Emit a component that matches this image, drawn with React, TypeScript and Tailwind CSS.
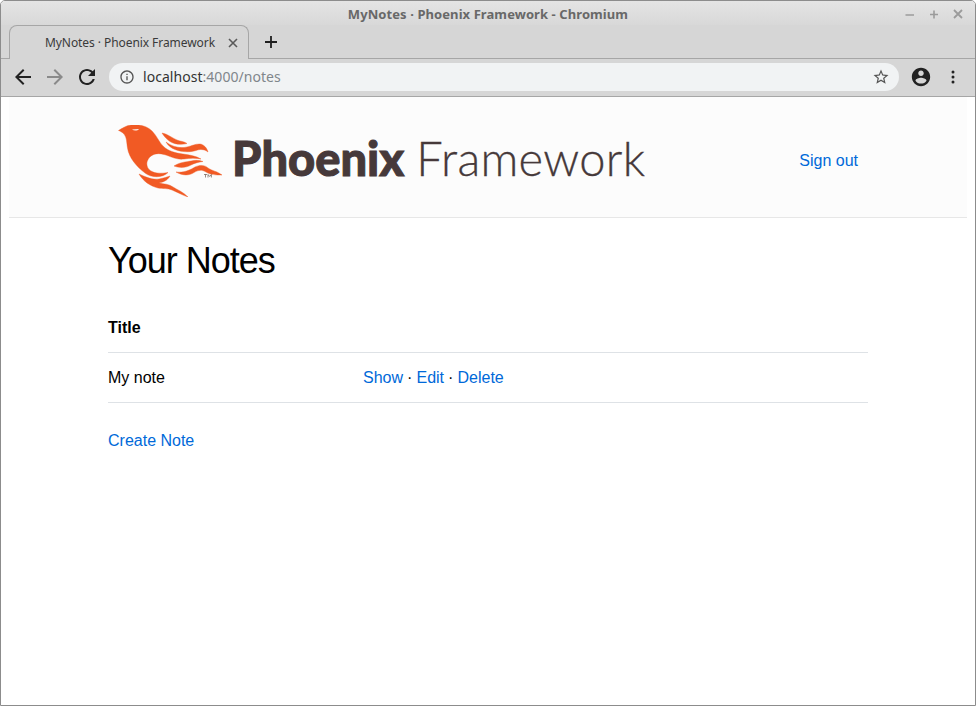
import React from "react";

const Ic = ({ d, className }: { d: string; className: string }) => (
  <svg viewBox="0 0 24 24" className={className} fill="currentColor"><path d={d} /></svg>
);

function Phoenix() {
  return (
    <svg viewBox="118 125 105 72" width={105} height={72} className="shrink-0" fill="#f15a24" stroke="#f15a24" strokeWidth="0.4">
      <path d="M118.500 130.500C122 128.500 126 125.500 131 125C139 124 147 126 152 131C157 136 159 142 163 146C168 151 175 153 183 154C190 155 196 156 201 159C196 158 190 158 184 159C176 160 170 156 164 154.500C156 152 149 155 147 162C146 168 150 172 157 173C162 173.500 165 173 168 172.500C163 178 151 178 145 173C137 167 129 158 127.500 148C126.500 142 127 138 124 134C122 132 120 131 118.500 130.500Z" />
      <path d="M132 129.500L139 129C137.500 131 134 131 132 129.500Z" fill="#fdf2ec" stroke="none" />
      <path d="M162 133C168 134 172 138 177 140C181 141.500 184 141.500 187 143.500C181 145 175 144.500 170 141.500C167 139.500 164 136.500 162 133Z" />
      <path d="M166 142C171 146 178 148 184 147.500C190 147 195 143.500 200 144C204 144.500 207 148 208 152C204 149 200 149 196 150.500C190 152.500 181 152 175 149.500C171 148 168 145.500 166 142Z" />
      <path d="M174 166C180 162 186 162 191 161C195 160 199 160 203 161.500C199 162 195 163 191 165C186 168 179 168 174 166Z" />
      <path d="M176 172C184 173 190 170 195 167C200 164.500 205 165 208 168C212 171 217 171 222 175C216 175 211 175 206 172C202 169.500 198 170 194 172.500C189 176 182 175.500 176 172Z" />
      <path d="M139 174C146 177 152 180 159 179C164 178 167 177 170 176C167 181 163 182 159 183C164 184 169 184 173 187C178 190 183 192 188 197C182 195 177 192 172 190C168 188 163 189 158 188C150 186 143 181 139 174Z" />
      <path d="M204 174.500H207M205.500 174.500V177.500M208 177.500V174.500L209.700 176.500L211.400 174.500V177.500" fill="none" stroke="#6b5a50" strokeWidth="0.7" />
    </svg>
  );
}

export default function App() {
  return (
    <div className="w-[976px] h-[706px] flex flex-col bg-white border border-[#8c8c8c] rounded-t-[5px] overflow-hidden font-['Liberation_Sans',sans-serif]">
      <div className="h-[24px] grid grid-cols-[1fr_auto_1fr] items-center bg-gradient-to-b from-[#e4e4e4] to-[#d8d8d8] font-['Noto_Sans',sans-serif]">
        <div />
        <div className="text-[13px] font-bold text-[#686868] pt-[4px] tracking-[0.08px]">MyNotes · Phoenix Framework - Chromium</div>
        <div className="flex justify-end items-center gap-[10px] pr-[10px] pt-[2px] text-[#9b9b9b]">
          <svg width="14" height="14" viewBox="0 0 14 14"><path d="M2.5 8H11" stroke="currentColor" strokeWidth="1.6" /></svg>
          <svg width="14" height="14" viewBox="0 0 14 14"><path d="M3 7.500H11M7 3.500V11.500" stroke="currentColor" strokeWidth="1.6" /></svg>
          <svg width="14" height="14" viewBox="0 0 14 14"><path d="M3 3L11 11M11 3L3 11" stroke="currentColor" strokeWidth="1.8" /></svg>
        </div>
      </div>
      <div className="h-[34px] flex items-end bg-[#d6d6d6] border-b border-[#a6a6a6] font-['Noto_Sans',sans-serif]">
        <div className="ml-[8px] w-[240px] h-[34px] -mb-px flex items-center bg-[#d6d6d6] border border-b-0 border-[#a6a6a6] rounded-t-[8px] pl-[35px] pr-[9px]">
          <span className="flex-1 text-[12px] text-[#3a3a3a] whitespace-nowrap tracking-[-0.07px]">MyNotes · Phoenix Framework</span>
          <svg width="12" height="12" viewBox="0 0 12 12" className="text-[#5a5a5a]"><path d="M2 2L10 10M10 2L2 10" stroke="currentColor" strokeWidth="1.6" /></svg>
        </div>
        <div className="ml-[15px] h-[33px] flex items-center">
          <svg width="14" height="14" viewBox="0 0 14 14" className="text-[#1f1f1f]"><path d="M7 1V13M1 7H13" stroke="currentColor" strokeWidth="1.8" /></svg>
        </div>
      </div>
      <div className="h-[38px] flex items-center pb-[2px] bg-[#d6d6d6] border-b border-[#a6a6a6] font-['Noto_Sans',sans-serif]">
        <Ic className="ml-[10px] w-[24px] h-[24px] text-[#222]" d="M20 11H7.830l5.590-5.590L12 4l-8 8 8 8 1.410-1.410L7.830 13H20v-2z" />
        <Ic className="ml-[8px] w-[24px] h-[24px] text-[#8a8a8a]" d="M4 11h12.170l-5.590-5.590L12 4l8 8-8 8-1.410-1.410L16.170 13H4v-2z" />
        <Ic className="ml-[8px] w-[24px] h-[24px] text-[#222]" d="M17.650 6.350C16.200 4.900 14.210 4 12 4c-4.420 0-7.990 3.580-7.990 8s3.570 8 7.990 8c3.730 0 6.840-2.550 7.730-6h-2.080c-.820 2.330-3.040 4-5.650 4-3.310 0-6-2.690-6-6s2.690-6 6-6c1.660 0 3.140.690 4.220 1.780L13 11h7V4l-2.350 2.350z" />
        <div className="ml-[10px] w-[790px] h-[28px] rounded-full bg-[#f1f3f4] flex items-center pl-[10px] pr-[9px]">
          <Ic className="w-[16px] h-[16px] text-[#555]" d="M11 7h2v2h-2zm0 4h2v6h-2zm1-9C6.480 2 2 6.480 2 12s4.480 10 10 10 10-4.480 10-10S17.520 2 12 2zm0 18c-4.410 0-8-3.590-8-8s3.590-8 8-8 8 3.590 8 8-3.590 8-8 8z" />
          <div className="ml-[8px] flex-1 text-[14px] text-[#333] whitespace-nowrap tracking-[0.04px]">localhost<span className="text-[#80868b]">:4000/notes</span></div>
          <Ic className="w-[18px] h-[18px] text-[#555]" d="M22 9.240l-7.190-.620L12 2 9.190 8.630 2 9.240l5.460 4.730L5.820 21 12 17.270 18.180 21l-1.630-7.030L22 9.240zM12 15.400l-3.760 2.270 1-4.280-3.320-2.880 4.380-.380L12 6.100l1.710 4.040 4.380.380-3.320 2.880 1 4.280L12 15.400z" />
        </div>
        <Ic className="ml-[11px] w-[22px] h-[22px] text-[#222]" d="M12 2C6.480 2 2 6.480 2 12s4.480 10 10 10 10-4.480 10-10S17.520 2 12 2zm0 3c1.660 0 3 1.340 3 3s-1.340 3-3 3-3-1.340-3-3 1.340-3 3-3zm0 14.200c-2.500 0-4.710-1.280-6-3.220.030-1.990 4-3.080 6-3.080 1.990 0 5.970 1.090 6 3.080-1.290 1.940-3.500 3.220-6 3.220z" />
        <svg width="4" height="14" viewBox="0 0 4 14" className="ml-[19px] text-[#222]" fill="currentColor"><circle cx="2" cy="2" r="1.500" /><circle cx="2" cy="7" r="1.500" /><circle cx="2" cy="12" r="1.500" /></svg>
      </div>
      <div className="flex-1 bg-white px-[8px]">
        <header className="h-[121px] bg-[#fcfcfc] border-b border-[#e7e7e7]">
          <div className="w-[760px] h-full mx-auto pl-[10px] pr-[10px] pt-[8px] flex items-center justify-between">
            <div className="flex items-center">
              <Phoenix />
              <div className="ml-[9px] text-[#46393a] text-[47px] leading-none whitespace-nowrap font-['Lato',sans-serif] -mt-[6px]">
                <span className="font-black [-webkit-text-stroke:1px_#46393a]">Phoenix</span> <span className="font-light tracking-[0.3px] [-webkit-text-stroke:0.3px_#46393a]">Framework</span>
              </div>
            </div>
            <a className="text-[16px] text-[#0069d9]">Sign out</a>
          </div>
        </header>
        <main className="w-[760px] mx-auto text-[16px] text-black">
          <h1 className="text-[36px] leading-[40px] pt-[23px] tracking-[-1px]">Your Notes</h1>
          <table className="mt-[21px] w-full">
            <thead>
              <tr className="h-[50px] border-b border-[#dee2e6]"><th className="text-left font-bold pt-[2px]">Title</th><th /></tr>
            </thead>
            <tbody>
              <tr className="h-[50px] border-b border-[#dee2e6]">
                <td className="w-[255px] pt-[2px]">My note</td>
                <td className="pt-[2px]"><a className="text-[#0069d9]">Show</a><span className="mx-[-0.4px]"> · </span><a className="text-[#0069d9]">Edit</a><span className="mx-[-0.4px]"> · </span><a className="text-[#0069d9]">Delete</a></td>
              </tr>
            </tbody>
          </table>
          <a className="block mt-[28px] leading-[20px] text-[#0069d9]">Create Note</a>
        </main>
      </div>
    </div>
  );
}
